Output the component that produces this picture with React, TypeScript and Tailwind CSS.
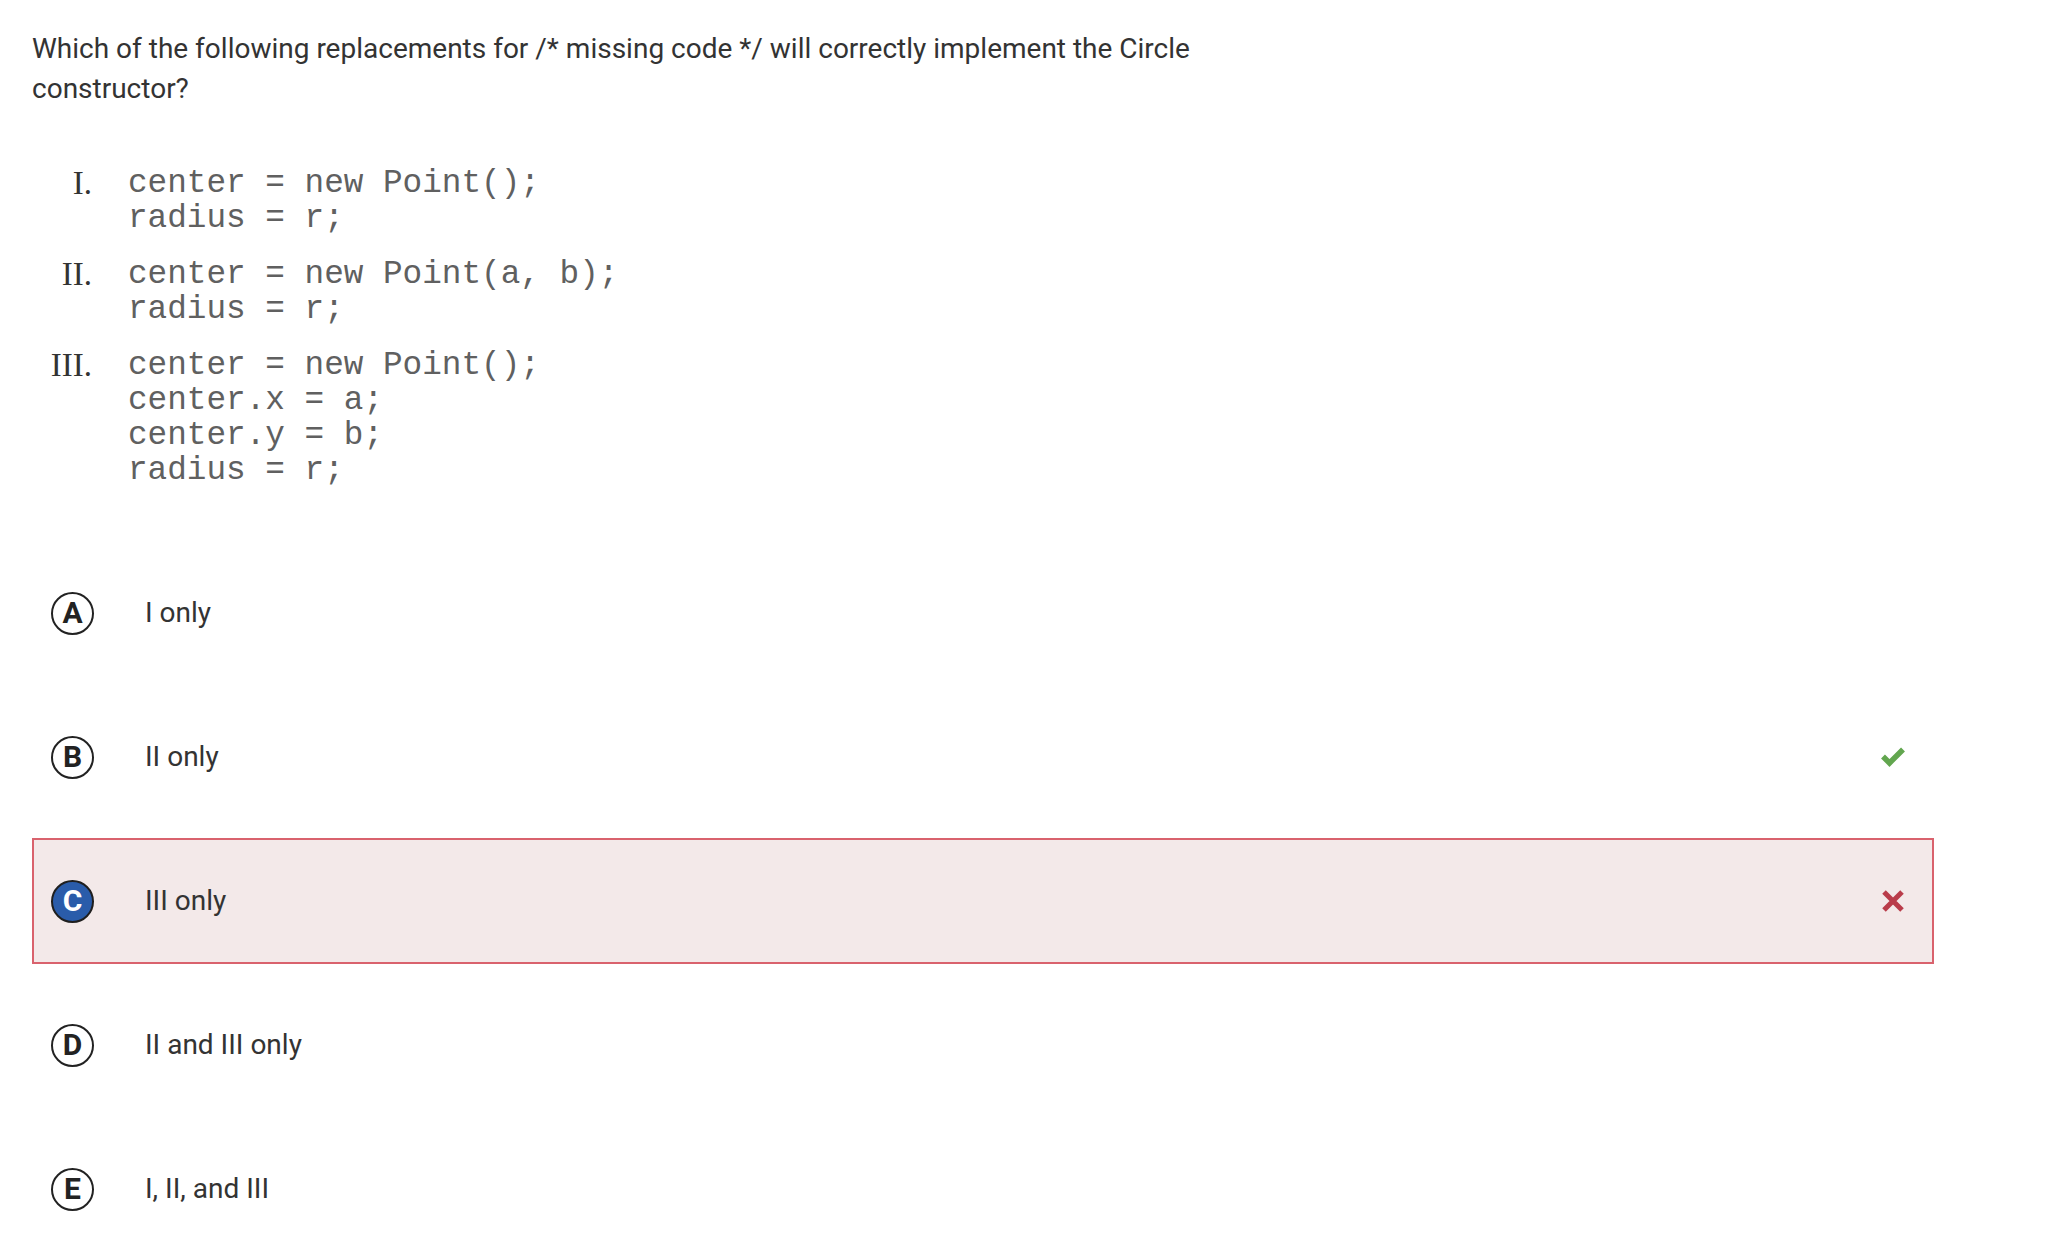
import type { ReactNode } from "react";

type Choice = {
  letter: string;
  text: string;
  selected?: boolean;
  mark?: "correct" | "wrong";
};

const choices: Choice[] = [
  { letter: "A", text: "I only" },
  { letter: "B", text: "II only", mark: "correct" },
  { letter: "C", text: "III only", selected: true, mark: "wrong" },
  { letter: "D", text: "II and III only" },
  { letter: "E", text: "I, II, and III" },
];

const snippets: { numeral: string; lines: string[] }[] = [
  { numeral: "I.", lines: ["center = new Point();", "radius = r;"] },
  { numeral: "II.", lines: ["center = new Point(a, b);", "radius = r;"] },
  {
    numeral: "III.",
    lines: ["center = new Point();", "center.x = a;", "center.y = b;", "radius = r;"],
  },
];

function CheckIcon() {
  return (
    <svg width="26" height="22" viewBox="0 0 26 22">
      <polyline
        points="3,10.5 9.5,17 23,3.5"
        fill="none"
        stroke="#62a64f"
        strokeWidth="5.5"
        strokeLinejoin="miter"
      />
    </svg>
  );
}

function CrossIcon() {
  return (
    <svg width="24" height="24" viewBox="0 0 24 24">
      <path
        d="M3 3 L21 21 M21 3 L3 21"
        fill="none"
        stroke="#b93c4a"
        strokeWidth="5"
      />
    </svg>
  );
}

function LetterBadge({ letter, selected }: { letter: string; selected?: boolean }) {
  return (
    <div
      className={
        selected
          ? "w-[43px] h-[43px] rounded-full border-2 border-[#1f1f1f] bg-[#2a5caa] text-white flex items-center justify-center font-bold text-[30px] leading-none"
          : "w-[43px] h-[43px] rounded-full border-2 border-[#222] bg-white text-[#222] flex items-center justify-center font-bold text-[30px] leading-none"
      }
    >
      {letter}
    </div>
  );
}

function ChoiceRow({ choice }: { choice: Choice }) {
  let icon: ReactNode = null;
  if (choice.mark === "correct") icon = <CheckIcon />;
  if (choice.mark === "wrong") icon = <CrossIcon />;

  return (
    <div
      className={
        choice.selected
          ? "h-[126px] flex items-center border-2 border-[#d9626d] bg-[#f3e9e9] pl-[17px] pr-[26px]"
          : "h-[126px] flex items-center border-2 border-transparent pl-[17px] pr-[26px]"
      }
    >
      <LetterBadge letter={choice.letter} selected={choice.selected} />
      <span className="ml-[51px] text-[28px] text-[#333]">{choice.text}</span>
      <div className="ml-auto w-[26px] flex justify-center">{icon}</div>
    </div>
  );
}

function App() {
  return (
    <div
      className="min-h-screen bg-white pl-[32px] pt-[29px] pb-[4px]"
      style={{ fontFamily: "Roboto, 'Liberation Sans', sans-serif" }}
    >
      <p className="w-[1240px] text-[28px] leading-[40px] text-[#333]">
        Which of the following replacements for /* missing code */ will correctly implement the
        Circle constructor?
      </p>

      <div className="mt-[57px] flex flex-col gap-[21px]">
        {snippets.map((s) => (
          <div key={s.numeral} className="flex">
            <div className="w-[60px] text-right font-['Liberation_Serif',serif] text-[33px] leading-[35px] text-[#333]">
              {s.numeral}
            </div>
            <pre className="ml-[36px] font-['Liberation_Mono',monospace] text-[32.7px] leading-[35px] text-[#606060]">
              {s.lines.join("\n")}
            </pre>
          </div>
        ))}
      </div>

      <div className="mt-[62px] w-[1902px] flex flex-col gap-[18px]">
        {choices.map((c) => (
          <ChoiceRow key={c.letter} choice={c} />
        ))}
      </div>
    </div>
  );
}

export default App;
